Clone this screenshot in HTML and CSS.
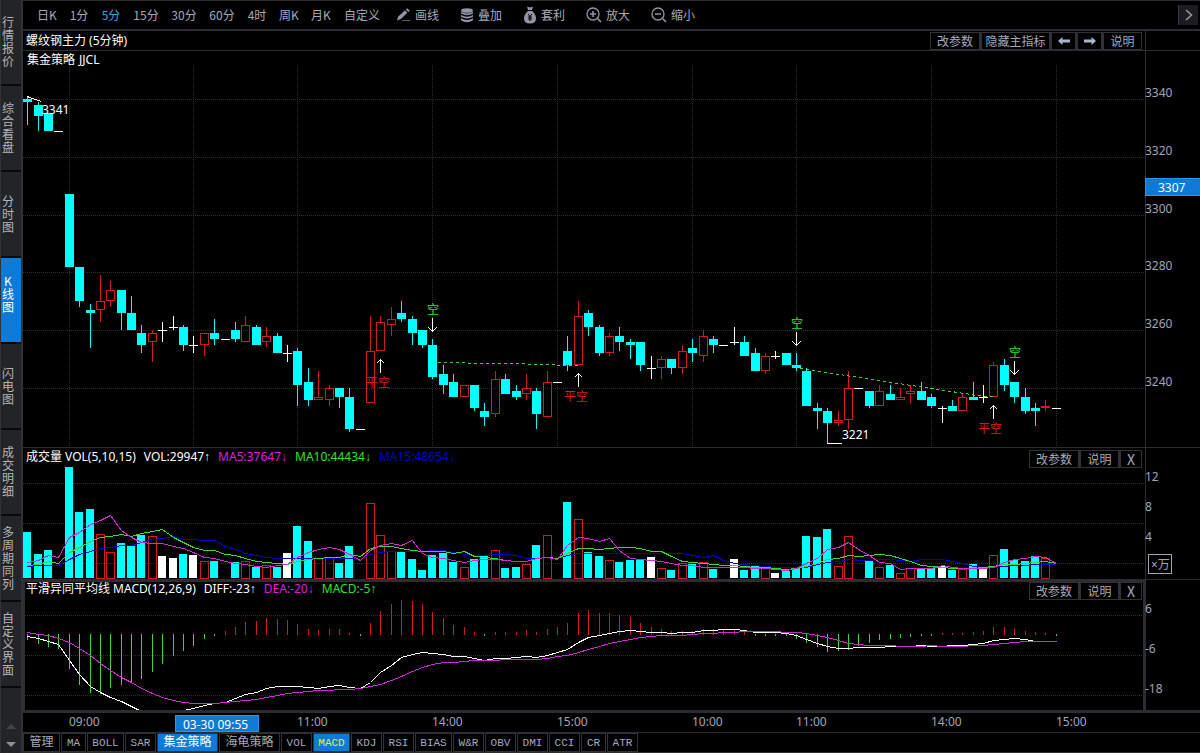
FILE: index.html
```html
<!DOCTYPE html>
<html lang="zh-CN">
<head>
<meta charset="utf-8">
<title>螺纹钢主力 (5分钟)</title>
<link rel="stylesheet" href="styles.css">
</head>
<body>
<nav class="side">
  <button class="side-tab">行情报价</button>
  <button class="side-tab">综合看盘</button>
  <button class="side-tab">分时图</button>
  <button class="side-tab active">K线图</button>
  <button class="side-tab">闪电图</button>
  <button class="side-tab">成交明细</button>
  <button class="side-tab">多周期同列</button>
  <button class="side-tab">自定义界面</button>
  <div class="side-scroll">
    <button class="scroll-btn dim" aria-label="上"><svg width="10" height="5"><path d="M0 5L5 0L10 5Z"/></svg></button>
    <button class="scroll-btn" aria-label="下"><svg width="10" height="5"><path d="M0 0L5 5L10 0Z"/></svg></button>
  </div>
</nav>
<main class="main">
  <header class="toolbar">
    <div class="periods">
      <button class="p2">日K</button><button class="p2">1分</button><button class="p2 on">5分</button><button class="p3">15分</button><button class="p3">30分</button><button class="p3">60分</button><button class="p2">4时</button><button class="p2">周K</button><button class="p2">月K</button><button class="p4">自定义</button>
    </div>
    <div class="tools">
      <button><svg width="14" height="14" viewBox="0 0 14 14"><path fill="#9094a6" d="M0 12.5L1.2 8.6L8 2.2L10.4 4.8L3.6 11.2ZM8.8 1.5L10.2 .2L12.8 2.8L11.3 4.1Z"/><path stroke="#5c5f6b" d="M5 12.5H13"/></svg>画线</button>
      <button><svg width="14" height="15" viewBox="0 0 14 15"><g fill="#9094a6"><ellipse cx="7" cy="2.5" rx="6" ry="2.3"/><path d="M1 3.8Q7 7.2 13 3.8V5.6Q7 9 1 5.6ZM1 7Q7 10.4 13 7V8.8Q7 12.2 1 8.8ZM1 10.2Q7 13.6 13 10.2V12.2Q7 16.2 1 12.2Z"/></g></svg>叠加</button>
      <button><svg width="14" height="18" viewBox="0 0 14 18"><path fill="#9094a6" d="M4 .5L7 1.600L10 .8L9 4H5ZM5 5H9.200Q13 8.500 13 12.500Q13 17.500 7 17.500Q1 17.500 1 12.500Q1 8.500 5 5Z"/><path d="M5 8L7 10.500L9 8M7 10.500V15M5 11H9M5 13H9" fill="none" stroke="#000"/></svg>套利</button>
      <button><svg width="16" height="16" viewBox="0 0 16 16" fill="none" stroke="#9094a6"><circle cx="7" cy="7" r="6" stroke-width="1.300"/><path d="M4 7H10M7 4V10M11.500 11.500L15 15" stroke-width="1.600"/></svg>放大</button>
      <button><svg width="16" height="16" viewBox="0 0 16 16" fill="none" stroke="#9094a6"><circle cx="7" cy="7" r="6" stroke-width="1.300"/><path d="M4 7H10M11.500 11.500L15 15" stroke-width="1.600"/></svg>缩小</button>
    </div>
    <button class="more" aria-label="更多"><svg width="8" height="12" fill="none" stroke="#9a9ba3" stroke-width="1.500"><path d="M1 1L6.500 6L1 11"/></svg></button>
  </header>

  <section class="row title-row">
    <div class="pane-head">
      <h1>螺纹钢主力 (5分钟)</h1>
      <div class="btns">
        <button class="b50">改参数</button><button class="b70">隐藏主指标</button><button class="b26" aria-label="前"><svg width="12" height="8"><path d="M0 4L4.500 0V2.500H12V5.500H4.500V8Z"/></svg></button><button class="b26" aria-label="后"><svg width="12" height="8"><path d="M12 4L7.500 0V2.500H0V5.500H7.500V8Z"/></svg></button><button class="b40">说明</button>
      </div>
    </div>
    <div class="axis"></div>
  </section>

  <section class="row price-row">
    <div class="pane">
      <div class="legend"><span>集金策略</span><span>JJCL</span></div>
      <svg class="plot" id="price"></svg>
    </div>
    <div class="axis"><svg class="plot" id="price-axis"></svg></div>
  </section>

  <section class="row vol-row">
    <div class="pane">
      <div class="pane-head">
        <div class="values"><span>成交量 VOL(5,10,15)</span><span>VOL:29947<i>↑</i></span><span class="mag">MA5:37647<i>↓</i></span><span class="grn">MA10:44434<i>↓</i></span><span class="blu">MA15:48654<i>↓</i></span></div>
        <div class="btns"><button class="b50">改参数</button><button class="b40">说明</button><button class="b23">X</button></div>
      </div>
      <svg class="plot" id="volume"></svg>
    </div>
    <div class="axis"><svg class="plot" id="volume-axis"></svg></div>
  </section>

  <section class="row macd-row">
    <div class="pane selected">
      <div class="pane-head">
        <div class="values"><span>平滑异同平均线 MACD(12,26,9)</span><span>DIFF:-23<i>↑</i></span><span class="mag">DEA:-20<i>↓</i></span><span class="grn">MACD:-5<i>↑</i></span></div>
        <div class="btns"><button class="b50">改参数</button><button class="b40">说明</button><button class="b23">X</button></div>
      </div>
      <svg class="plot clip" id="macd"></svg>
    </div>
    <div class="axis lined"><svg class="plot" id="macd-axis"></svg></div>
  </section>

  <div class="time-row"><svg class="plot" id="time-axis"></svg></div>

  <footer class="tabs">
    <button class="t4">管理</button><button class="t2">MA</button><button class="t4">BOLL</button><button class="t3">SAR</button><button class="t8 on">集金策略</button><button class="t8">海龟策略</button><button class="t3">VOL</button><button class="t4 on yellow">MACD</button><button class="t3">KDJ</button><button class="t3">RSI</button><button class="t4">BIAS</button><button class="t3">W&amp;R</button><button class="t3">OBV</button><button class="t3">DMI</button><button class="t3">CCI</button><button class="t2">CR</button><button class="t3">ATR</button>
  </footer>
</main>
<script src="chart.js"></script>
</body>
</html>
```
FILE: styles.css
```css
* { box-sizing: border-box; }
body {
  margin: 0;
  min-height: 100vh;
  display: flex;
  background: #000;
  color: #a4a9bb;
  font: 12px/14px "Noto Sans", "Noto Sans CJK SC", sans-serif;
}
button {
  margin: 0;
  padding: 0;
  border: 0;
  background: none;
  color: inherit;
  font: 12px/14px "Noto Sans CJK SC", sans-serif;
  white-space: nowrap;
}

/* side navigation */
.side {
  width: 23px;
  flex: none;
  display: flex;
  flex-direction: column;
  background: #222428;
  border-left: 1px solid #303238;
  border-right: 2px solid #303238;
}
.side-tab {
  height: 86px;
  padding: 0 6px 2px 0;
  border-bottom: 2px solid #08090a;
  color: #b6b6b8;
  line-height: 13px;
  white-space: normal;
  word-break: break-all;
}
.side-tab.active { background: #0d7ad6; color: #fff; padding-bottom: 14px; }
.side-scroll {
  flex: 1;
  display: flex;
  flex-direction: column;
  justify-content: flex-end;
  align-items: center;
  gap: 13px;
  padding-bottom: 6px;
}
.scroll-btn { display: flex; }
.scroll-btn path { fill: #8e919c; }
.scroll-btn.dim path { fill: #43454b; }

.main { flex: 1; min-width: 0; display: flex; flex-direction: column; }

/* toolbar */
.toolbar {
  height: 31px;
  display: flex;
  align-items: center;
  border-top: 1px solid #2b2d32;
  border-bottom: 2px solid #2b2d32;
  padding: 0 2px 0 8px;
}
.periods { display: flex; }
.p2 { width: 32px; }
.p3 { width: 38px; }
.p4 { width: 50px; }
.periods .on { color: #3ea4e0; }
.tools { display: flex; gap: 21px; margin-left: 10px; }
.tools button { display: flex; align-items: center; gap: 4px; height: 20px; }
.more {
  width: 20px;
  height: 20px;
  margin-left: auto;
  display: flex;
  align-items: center;
  justify-content: center;
  background: #1c1d22;
  border-left: 1px solid #34363c;
}

/* chart rows */
.row {
  display: grid;
  grid-template-columns: minmax(0, 1fr) 55px;
  grid-template-rows: minmax(0, 1fr);
}
.axis { border-left: 1px solid #2b2d32; }
.axis.lined { border-top: 1px solid #2b2d32; }
.title-row { height: 20px; border-bottom: 1px solid #2b2d32; }
.price-row { flex: 1; min-height: 397px; border-bottom: 1px solid #2b2d32; }
.vol-row, .macd-row { height: 131px; }
.pane { display: flex; flex-direction: column; min-width: 0; }
.selected { border: solid #2b2d32; border-width: 3px 2px 0; }
.pane-head {
  display: flex;
  justify-content: space-between;
  align-items: flex-end;
  height: 20px;
  padding: 0 3px;
  color: #fff;
}
.title-row .pane-head { height: 19px; }
.selected .pane-head { height: 18px; padding: 0 1px; }
h1 { margin: 0; font: 12px/18px "Noto Sans", "Noto Sans CJK SC", sans-serif; }
.legend { display: flex; gap: 4px; height: 14px; line-height: 18px; padding: 0 4px; color: #fff; }
.values { display: flex; gap: 8px; padding-bottom: 4px; }
.values i { font: 12px/14px "Liberation Sans", sans-serif; }
.mag { color: #e01ee0; }
.grn { color: #2ee62e; }
.blu { color: #0000d0; }
.btns { display: flex; color: #a4a9bb; }
.btns button { height: 18px; border: 1px solid #2f3137; display: flex; align-items: center; justify-content: center; }
.btns button + button { border-left-width: 2px; }
.btns path { fill: #a9b6cf; }
.btns .b23 { width: 23px; font-size: 14px; }
.b26 { width: 26px; }
.b40 { width: 40px; }
.b50 { width: 50px; }
.b70 { width: 70px; }

.plot { display: block; width: 100%; flex: 1; min-height: 0; overflow: visible; }
.axis .plot { height: 100%; }
.clip { overflow: hidden; }
.time-row { height: 22px; border-top: 3px solid #2b2d32; }
.time-row .plot { height: 100%; }

/* plot content */
.plot text { font: 12px "Noto Sans", "Noto Sans CJK SC", sans-serif; fill: #a0a5b5; }
.plot line, .plot rect, .plot polyline, .plot path { shape-rendering: crispEdges; }
.plot .grid { stroke: #2c2e31; stroke-dasharray: 1 1; }
.plot .note { fill: #fff; }
.plot .buy { fill: #d81e1e; }
.plot .sell { fill: #2ee62e; }
.plot .tag { fill: #0d7ad6; stroke: #2b95ea; }
.plot .unit { fill: none; stroke: #a0a5b5; }

/* indicator tabs */
.tabs {
  height: 21px;
  display: flex;
  gap: 1px;
  border-top: 1px solid #2b2d32;
  border-bottom: 1px solid #2b2d32;
}
.tabs button { border: 1px solid #2f3137; font-family: "Liberation Mono", "Noto Sans CJK SC", monospace; font-size: 11px; }
.tabs .t4:first-child, .tabs .t8 { font-size: 12px; }
.t2 { width: 25px; }
.t3 { width: 31px; }
.t4 { width: 37px; }
.t8 { width: 61px; }
.tabs .on { background: #0d7ad6; color: #fff; }
.tabs .yellow { color: #f4ec1c; }
```
FILE: chart.js
```js
const NS = 'http://www.w3.org/2000/svg';
const CYAN = '#00ffff', RED = '#d01c1c', WHITE = '#ffffff', GREEN = '#3cd63c', MAGENTA = '#d02ad0', BLUE = '#0000c8';
const X = i => Math.round(27.2 + i * 10.39);

function layer(id, ox, oy) {
  const g = document.createElementNS(NS, 'g');
  g.setAttribute('transform', `translate(${-ox} ${-oy})`);
  document.getElementById(id).appendChild(g);
  return (tag, attrs, text) => {
    const e = document.createElementNS(NS, tag);
    for (const k in attrs) e.setAttribute(k, attrs[k]);
    if (text !== undefined) e.textContent = text;
    g.appendChild(e);
  };
}
const rect = (d, x, y, w, h, fill) => d('rect', { x, y, width: w, height: h, fill });
const box = (d, x, y, w, h) => d('rect', { x: x + .5, y: y + .5, width: w - 1, height: Math.max(h - 1, 1), fill: 'none', stroke: RED });
const hgrid = (d, left, ys) => ys.forEach(y =>
  d('line', { x1: 0, x2: '100%', y1: y + .5, y2: y + .5, transform: `translate(${left} 0)`, class: 'grid' }));
const line = (d, ys, color, start = 0) =>
  d('polyline', { points: ys.map((y, i) => `${X(i + start) + .5},${y + .5}`).join(' '), fill: 'none', stroke: color });
const label = (d, x, y, text, cls) => d('text', { x, y, class: cls || '' }, text);

/* kind, body top, body bottom, high, low;  c = down, r = up, w = doji, f = small filled up */
const candles = `c,99,102,96,125 c,105,116,102,131 c,113,131,113,131 w,131,131,131,131 c,194,267,194,267 c,267,301,267,307 c,310,313,304,348 r,301,310,275,322 r,290,301,281,307 c,290,313,290,330
c,313,330,296,330 c,333,345,325,353 r,333,342,330,362 w,330,330,322,342 w,327,327,316,330 c,327,345,325,351 w,345,345,336,353 r,333,345,333,356 c,333,339,319,345 w,339,339,339,339
c,330,339,322,342 r,325,342,316,342 c,327,345,325,345 r,336,342,327,347 c,336,353,333,353 w,353,353,345,362 c,351,385,348,406 c,382,400,368,406 r,397,400,371,400 r,388,400,385,406
c,388,397,388,408 c,397,429,388,432 w,429,429,429,429 r,351,403,316,403 r,322,351,316,351 r,319,325,307,336 c,313,319,301,322 c,319,333,316,345 c,330,345,330,348 c,345,377,339,379
c,374,385,365,394 c,382,397,374,397 r,385,397,385,397 c,385,408,385,411 c,411,417,403,426 r,379,414,371,417 c,379,394,374,394 c,391,397,385,400 r,388,394,374,400 c,391,414,388,429
r,382,417,371,417 w,382,382,382,382 c,351,365,336,371 r,316,365,301,365 c,313,327,310,336 c,327,353,325,356 r,336,353,333,356 c,336,342,327,351 c,342,345,339,359 c,342,365,342,371
w,368,368,356,379 r,359,368,356,379 c,359,368,359,374 r,351,368,345,374 c,348,353,339,362 r,336,356,330,362 c,339,345,336,353 w,345,345,345,345 w,342,342,327,345 c,342,356,336,356
c,353,371,348,371 r,356,371,353,374 w,356,356,351,359 c,353,365,353,365 c,365,368,353,371 c,371,406,368,406 c,408,411,403,429 c,411,423,408,443 r,420,423,411,426 r,388,420,371,429
w,388,388,388,388 c,391,406,391,408 r,391,406,385,406 c,394,400,385,400 r,397,400,388,400 r,391,394,385,403 c,391,400,382,400 c,397,406,394,408 w,408,408,406,423 c,406,411,400,411
r,397,411,394,411 c,397,400,382,400 w,397,397,385,403 r,365,397,362,397 c,365,385,359,391 c,382,397,382,403 c,397,411,388,414 c,408,411,403,426 f,406,408,400,411 w,408,408,408,408`
  .split(/\s+/).map(s => { const [k, ...n] = s.split(','); return [k, ...n.map(Number)]; });

const volumes = [532,554,550,0,467,512,509,534,552,543,546,535,536,556,558,554,555,561,561,0,562,561,567,565,567,553,526,541,558,557,563,546,0,503,535,551,552,559,570,555,553,562,567,559,556,550,568,567,564,545,535,0,502,519,552,556,560,562,560,560,557,568,570,563,564,562,569,0,559,570,566,568,573,571,568,536,537,529,566,536,0,561,567,565,573,568,568,568,566,570,569,564,568,555,549,560,561,556,558,0];
const ma5 = [562,560,555,557,537,532,524,520,515,530,537,542,543,543,546,548,552,557,558,561,563,564,566,567,565,564,557,552,549,547,549,554,560,550,545,543,545,540,553,557,558,560,562,560,559,559,560,561,561,558,557,559,545,537,538,541,538,550,558,559,560,561,563,565,565,567,567,567,567,567,568,568,569,570,568,563,558,549,547,542,549,555,562,563,569,568,568,568,565,567,568,568,568,567,562,559,558,556,557,563];
const ma10 = [565,564,561,563,552,547,541,537,536,534,536,533,531,529,537,542,547,550,550,554,555,558,561,562,563,564,561,559,558,557,557,554,556,548,546,546,548,550,551,551,551,553,551,556,557,558,560,561,561,558,557,558,553,548,548,549,548,547,547,548,551,551,556,561,562,563,564,565,565,566,567,567,568,569,568,566,563,559,558,555,556,555,554,555,558,561,565,566,567,568,568,568,567,566,564,564,563,562,561,563];
const ma15 = [566,565,565,565,559,554,551,548,547,545,545,542,539,538,536,539,539,540,540,546,549,553,555,557,558,558,558,558,558,558,558,558,559,554,552,551,551,551,551,550,550,552,554,555,555,554,554,555,558,558,557,558,555,553,553,553,553,553,553,553,553,553,553,553,555,557,555,560,563,564,565,566,567,567,567,567,564,562,561,559,560,560,559,559,560,561,559,559,559,561,563,566,567,567,566,565,565,564,564,564];

const hist = [640,644,647,649,669,685,693,694,688,685,682,679,672,664,656,651,646,639,636,631,627,622,621,618,619,620,624,629,630,629,629,633,636,623,611,604,600,601,604,612,618,625,627,632,636,632,632,632,630,632,629,627,623,613,610,613,613,615,617,623,627,629,631,631,631,629,629,629,630,632,636,636,636,636,639,643,647,652,651,650,646,643,640,639,638,637,636,636,633,633,633,632,631,627,627,629,631,632,633,636];
const diff1 = [636,638,641,644,660,674,686,692,697,701,706,711];
const diff2 = [711,710,708,705,703,702,698,694,692,688,686,686,686,687,688,686,685,687,688,682,672,665,657,654,652,653,654,656,656,658,660,658,658,657,656,657,655,652,649,642,637,635,633,631,630,631,632,632,633,632,632,630,630,629,629,630,632,632,632,633,635,639,643,646,648,648,647,647,647,646,646,646,645,646,646,645,645,644,643,640,639,638,639,641,641,641];
const dea = [632,634,635,638,642,648,655,663,670,677,682,688,693,697,700,702,703,703,703,702,701,700,699,697,695,693,692,691,690,690,689,689,688,686,684,680,676,671,667,664,662,662,661,660,660,660,659,659,659,659,658,656,655,652,649,646,643,641,639,637,636,635,635,635,634,633,633,632,632,631,631,631,631,632,632,633,635,637,640,643,644,645,645,645,646,646,646,645,646,646,646,645,645,644,643,642,641,641,641,641];

const times = [[4, '09:00'], [26, '11:00'], [39, '14:00'], [51, '15:00'], [64, '10:00'], [74, '11:00'], [87, '14:00'], [99, '15:00']];

/* price */
let d = layer('price', 23, 65);
hgrid(d, 23, [99, 157, 215, 272, 330, 388]);
[4, 16, 26, 39, 51, 64, 74, 87, 99].forEach(i => d('line', { x1: X(i) + .5, x2: X(i) + .5, y1: 65, y2: 446, class: 'grid' }));
candles.forEach(([k, top, bottom, high, low], i) => {
  const x = X(i);
  if (k === 'w') {
    rect(d, x - 4, top, 9, 1, WHITE);
    if (low > high) rect(d, x, high, 1, low - high, WHITE);
  } else if (k === 'r') {
    rect(d, x, high, 1, top - high, RED);
    rect(d, x, bottom, 1, low - bottom, RED);
    box(d, x - 4, top, 9, bottom - top);
  } else {
    const color = k === 'c' ? CYAN : '#f01010';
    const left = Math.max(x - 4, 23);
    rect(d, x, high, 1, low - high, color);
    rect(d, left, top, x + 5 - left, bottom - top, color);
  }
});
d('path', { d: 'M27 96.500L41 101.500M827 443.500H842', stroke: WHITE, fill: 'none' });
d('path', { d: 'M438 362.500L557 364.500M800 368.500L984 396.500', stroke: GREEN, 'stroke-dasharray': '3 3', fill: 'none' });
d('path', { d: 'M557 365.500H578M984 396.500H995', stroke: '#a8b820', 'stroke-dasharray': '3 3', fill: 'none' });
label(d, 42, 114, '3341', 'note');
label(d, 842, 439, '3221', 'note');
[[432, 318, 1], [796, 332, 1], [1014, 361, 1], [380, 359, 0], [578, 373, 0], [993, 405, 0]].forEach(([x, y, down]) => {
  const tip = down ? y + 13.5 : y + .5, wing = down ? -4 : 4;
  d('path', { d: `M${x + .5} ${y}V${y + 14}M${x - 3.5} ${tip + wing}L${x + .5} ${tip}L${x + 4.5} ${tip + wing}`, stroke: WHITE, fill: 'none' });
});
[[427, 314], [791, 328], [1009, 357]].forEach(([x, y]) => label(d, x, y, '空', 'sell'));
[[366, 387], [564, 401], [978, 433]].forEach(([x, y]) => label(d, x, y, '平空', 'buy'));

/* volume */
d = layer('volume', 23, 468);
hgrid(d, 23, [483, 523, 563]);
volumes.forEach((y, i) => {
  if (!y) return;
  const x = X(i) - 4, k = candles[i][0];
  if (k === 'r' || k === 'f') box(d, x, y, 9, 579 - y);
  else rect(d, Math.max(x, 23), y, 8, 578 - y, k === 'c' ? CYAN : WHITE);
});
line(d, ma15, BLUE);
line(d, ma10, GREEN);
line(d, ma5, MAGENTA);

/* macd */
d = layer('macd', 25, 600);
hgrid(d, 25, [615, 655, 695]);
hist.forEach((y, i) => y < 635 ? rect(d, X(i), y, 1, 635 - y, RED) : rect(d, X(i), 634, 1, y - 634, GREEN));
line(d, diff1, WHITE);
line(d, diff2, WHITE, 14);
line(d, dea, MAGENTA);

/* axes */
d = layer('price-axis', 1146, 51);
[[97, 3340], [155, 3320], [213, 3300], [270, 3280], [328, 3260], [386, 3240]].forEach(([y, t]) => label(d, 1145, y, t));
d('rect', { x: 1145.5, y: 178.5, width: 55, height: 17, class: 'tag' });
label(d, 1158, 192, '3307', 'note');

d = layer('volume-axis', 1146, 448);
[[481, 12], [511, 8], [541, 4]].forEach(([y, t]) => label(d, 1145, y, t));
d('rect', { x: 1148.5, y: 554.5, width: 23, height: 19, class: 'unit' });
label(d, 1151, 569, '×万');

d = layer('macd-axis', 1146, 580);
[[613, '6'], [653, '-6'], [693, '-18']].forEach(([y, t]) => label(d, 1145, y, t));

d = layer('time-axis', 23, 713);
times.forEach(([i, t]) => label(d, X(i), 726, t));
d('rect', { x: 175.5, y: 715.5, width: 83, height: 16, class: 'tag' });
label(d, 183, 729, '03-30 09:55', 'note');
```
